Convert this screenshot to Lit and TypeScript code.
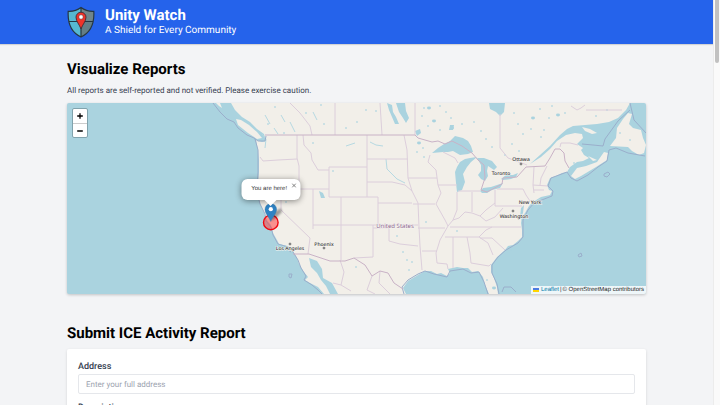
import { LitElement, html, svg, css } from "lit";
import { customElement } from "lit/decorators.js";

const LAND =
  "M231 103 L235 110 L242 117 L250 122 L257 129 L264 134 L266 141 L262 142 L256 140 L258 150 L259 160 L259 172 L258 182 L257 192 L260 203 L264 212 L266 219 L271 225 L273 233 L277 240 L279 244 L288 246 L293 251 L297 258 L299 264 L304 272 L308 277 L305 280 L310 283 L318 287 L324 294 L330 294 L326 286 L321 280 L317 273 L311 267 L309 258 L317 261 L322 269 L323 278 L332 283 L338 294 L406 294 L403 288 L408 281 L418 275 L425 271 L431 271 L437 274 L441 273 L447 276 L450 273 L448 269 L457 267 L463 268 L468 268 L472 272 L478 271 L483 277 L485 285 L489 294 L498 294 L497 287 L494 278 L491 272 L491 265 L497 257 L505 250 L508 246 L513 245 L518 241 L522 237 L522 230 L521 223 L522 217 L525 213 L529 206 L533 202 L541 197 L550 195 L552 191 L549 190 L547 185 L550 178 L556 176 L562 173 L567 172 L570 167 L577 162 L583 161 L589 158 L584 155 L581 150 L583 148 L577 144 L583 138 L582 134 L575 133 L566 135 L557 141 L550 149 L541 157 L530 164 L540 155 L550 146 L560 135 L567 129 L573 126 L597 124 L609 122 L618 118 L626 110 L630 103 Z";

const ISLANDS = [
  "M216 103 L220 103 L222 108 L219 106Z",
  "M236 119 L241 120 L249 125 L257 132 L262 138 L257 139 L248 133 L238 125Z",
  "M582 127 L590 129 L597 133 L592 134 L585 131Z",
  "M571 176 L577 168 L586 166 L597 162 L604 152 L608 153 L607 160 L596 167 L581 176 L575 179Z",
  "M588 156 L597 160 L593 161Z",
  "M628 113 L632 114 L629 124 L633 128 L641 130 L643 138 L646 145 L644 153 L639 155 L632 151 L628 147 L610 146 L616 138 L617 128 L623 119Z",
];

const LAKES = [
  "M432 153 L438 148 L444 144 L450 141 L455 136 L463 138 L468 141 L471 146 L473 152 L468 154 L460 155 L453 151 L448 152 L443 152Z",
  "M455 172 L457 167 L460 162 L465 159 L470 158 L477 157 L471 162 L467 167 L463 174 L465 182 L462 190 L457 192 L456 183Z",
  "M477 158 L484 158 L492 161 L497 167 L494 170 L488 166 L487 171 L488 176 L485 181 L481 179 L478 175 L481 171 L481 165Z",
  "M480 191 L483 188 L491 187 L497 185 L503 183 L500 188 L492 190 L487 193 L482 193Z",
  "M501 179 L506 175 L513 175 L518 173 L516 177 L511 179 L503 180Z",
  "M489 103 L505 103 L504 112 L500 116 L496 112 L490 109Z",
  "M396 103 L405 103 L406 111 L409 118 L406 123 L403 118 L399 112Z",
  "M387 103 L392 105 L393 112 L396 117 L399 124 L395 124 L392 117 L389 110Z",
  "M319 191 L323 193 L325 198 L321 198Z",
  "M415 131 L420 129 L421 133 L417 136Z",
  "M450 125 L454 125 L453 130 L449 130Z",
  "M521 208 L524 205 L523 213 L521 217 L522 221 L520 217Z",
];

const RIVERS =
  "M370 142 L376 145 L383 146 M386 159 L387 169 L397 179 L405 183 M346 146 L352 144 L355 143 M262 134 L266 139 L265 148 M265 115 L270 124 M281 115 L285 122 M290 122 L295 132 M274 128 L278 134 M313 112 L317 120";

const STATES = [
  "M290 103 L300 113 L310 126 L312 135 M335 103 V135 M380 103 L382 135 M415 103 V135 M500 114 V148 L508 158 L527 165",
  "M297 135 V158 L299 166 L299 189 M260 157 L263 161 L278 160 L297 159 M303 135 L304 145 L311 153 L312 160 L318 170 L329 170",
  "M258 189 H329 M329 167 H367 M329 167 V197 M367 135 V197 M329 197 H378 V225 M281 189 V210 L310 238 L308 254 M313 189 V229",
  "M341 197 V260 M313 225 H418 M378 203 H412 M373 225 V257 L354 258 M373 228 H389 V241 L400 244 L418 246",
  "M367 159 H408 M367 182 H392 L405 185 L412 191 L418 203 L419 227 L420 246 L422 270 M404 135 L407 150 L408 178 L412 191",
  "M408 178 H437 M430 155 L428 162 L436 170 L438 185 L441 193 L436 204 L445 220 L448 226 L440 240 L436 253 L437 263 L447 264 L448 269",
  "M413 204 H435 M438 185 H457 M443 152 L455 158 L458 163 M457 192 V210 L453 220 L448 226 M472 192 V212 M458 191 H480 M495 190 V206 H522",
  "M453 220 L459 218 L465 212 L472 213 L480 216 L486 210 L495 203 M497 189 H523 L526 195 L530 201 M418 228 H445 M450 227 H521 M445 237 H479 L486 230 L492 227",
  "M453 237 V268 M467 237 L470 253 L471 263 L489 266 L491 264 M422 251 H437 M479 237 L488 243 L493 255 M480 238 L492 238 L505 250 M480 216 L486 221 L495 217 L503 208",
  "M534 167 L533 185 L534 193 M533 185 L548 186 M534 190 H544 M547 166 L541 178 L540 185 M560 147 L561 143 L570 143 L578 145",
  "M571 106 L577 110 L581 108 L585 105 M586 110 H622 M340 260 L344 272 L341 285 L351 291 M341 285 L333 283 M372 276 L367 290 L375 294 M380 271 L379 283 L390 294",
];

const BORDER =
  "M265 135 H415 L418 138 L425 140 L432 142 L438 141 L445 144 L452 141 L462 146 L472 153 L478 160 L484 165 L485 178 L481 190 L487 192 L502 184 L503 178 L517 177 L526 167 L545 166 L550 158 L555 149 L560 149 L564 153 L565 161 L569 168 M293 254 L309 254 L330 261 L345 261 L354 258 L365 265 L372 276 L380 271 L388 273 L394 283 L403 289";

const SEA_BORDER =
  "M213 103 L220 112 L227 119 L234 122 L238 128 L247 135 L254 138 L258 141 L265 141 L266 136 M255 139 L258 150 L258 172 L257 192 L260 204 L265 214 L266 221 L271 227 L273 235 L278 244 L288 247 L293 252 L298 260 L301 268 L306 276 L304 280 L312 285 L318 290 L322 294 M404 294 L402 287 L408 280 L418 274 L425 271 L434 274 L447 277 L450 271 L463 269 L471 273 L479 272 L484 282 L488 294 M499 294 L497 284 L492 273 L492 265 L498 257 L506 250 L518 243 L523 237 L523 220 L528 210 L534 203 L552 196 L553 191 L548 186 L551 178 L567 172 L571 178 L577 181 L588 175 L598 167 L607 161 L609 150 L616 148 L628 153 L645 156 M630 103 L634 120 L646 133 M582 144 L593 145 L603 146 L605 139 L618 121 L630 110";

const OCEAN_ISLETS =
  "M604 174 L608 172 L610 174 L607 177 L604 176Z M578 255 L581 253 L582 256 L579 257Z M289 274 L292 274 L291 278 L289 277Z M502 292 L504 287 L511 287 L516 292 M288 250 L291 252";

const PONDS: [number, number, number][] = [
  [366, 110, 1], [346, 128, 1], [324, 124, 1], [313, 143, 1], [333, 171, 1], [306, 113, 1], [321, 105, 1],
  [357, 122, 1], [376, 111, 1], [429, 108, 2], [440, 106, 1], [422, 116, 1], [434, 121, 2], [446, 112, 1],
  [428, 126, 1], [440, 130, 1], [424, 108, 1], [419, 143, 2], [417, 152, 1], [423, 148, 1], [424, 157, 1],
  [451, 118, 1], [462, 124, 1], [452, 128, 2], [474, 122, 1], [481, 131, 1], [486, 139, 1], [492, 147, 1],
  [514, 113, 1], [518, 124, 1], [523, 134, 1], [533, 118, 2], [531, 129, 1], [544, 130, 1], [540, 109, 1],
  [558, 115, 2], [549, 118, 1], [565, 113, 1], [541, 137, 1], [512, 144, 1], [519, 151, 1], [505, 155, 1],
  [596, 116, 1], [607, 110, 1], [552, 106, 1], [403, 252, 1], [407, 260, 1], [397, 236, 1], [412, 262, 1],
  [356, 267, 1], [286, 202, 1], [457, 231, 1], [494, 288, 2], [487, 280, 1], [426, 222, 1], [409, 270, 1],
  [511, 250, 1], [275, 107, 1], [268, 124, 1], [284, 133, 1], [620, 133, 1], [574, 163, 1], [630, 140, 1],
];

const CITIES = [
  { name: "Ottawa", x: 521, y: 161, dot: [521, 164] },
  { name: "Toronto", x: 501, y: 175, dot: null },
  { name: "New York", x: 530, y: 204, dot: null },
  { name: "Washington", x: 514, y: 218, dot: [513, 211] },
  { name: "Phoenix", x: 324, y: 246, dot: [324, 248] },
  { name: "Los Angeles", x: 290, y: 250, dot: [290, 244] },
];

@customElement("report-map")
class ReportMap extends LitElement {
  static styles = css`
    :host {
      display: block;
      position: relative;
      height: 191px;
      overflow: hidden;
      border-radius: 2px;
      background: #aad3df;
      box-shadow: 0 1px 3px #0003;
      font-family: "Liberation Sans", Arial, sans-serif;
    }
    .canvas { display: block; width: 100%; height: 100%; }
    .land { fill: #f2efe9; }
    .lake { fill: #aad3df; }
    .river { fill: none; stroke: #b6d9e2; stroke-width: 1; }
    .state { fill: none; stroke: #dccedb; stroke-width: 1; }
    .border { fill: none; stroke: #c9b2c6; stroke-width: 1; }
    .sea { fill: none; stroke: #9aaecb; stroke-width: 1; }
    .city, .country {
      font-family: "Noto Sans", sans-serif;
      font-size: 6px;
      text-anchor: middle;
      fill: #333;
      stroke: #f7f5f1;
      stroke-width: 1;
      paint-order: stroke;
    }
    .city { font-size: 5px; font-weight: 500; }
    .country { fill: #8d6690; }
    .dot { fill: #888; stroke: #666; stroke-width: 0.5; }
    .zoom {
      position: absolute;
      left: 5px;
      top: 5px;
      display: flex;
      flex-direction: column;
      border: 1px solid #81a3ad;
      border-radius: 2px;
      background: #fff;
    }
    .step {
      display: grid;
      place-items: center;
      width: 14px;
      height: 14px;
      padding: 0;
      border: 0;
      background: none;
    }
    .step + .step { border-top: 1px solid #ccc; }
    .popup {
      position: absolute;
      left: 35.2%;
      top: 76px;
      transform: translateX(-50%);
      box-sizing: border-box;
      width: 59px;
      height: 21px;
      padding: 0 10px;
      border-radius: 6px;
      background: #fff;
      box-shadow: 0 1px 6px #0007;
      font-size: 6px;
      line-height: 21px;
      color: #333;
      white-space: nowrap;
    }
    .popup::after {
      content: "";
      position: absolute;
      left: 50%;
      top: 100%;
      border: 6px solid transparent;
      border-top-color: #fff;
      border-bottom: 0;
      transform: translateX(-50%);
    }
    .close {
      position: absolute;
      right: 2px;
      top: 2px;
      display: grid;
      place-items: center;
      width: 8px;
      height: 8px;
      padding: 0;
      border: 0;
      background: none;
    }
    .credit {
      position: absolute;
      right: 0;
      bottom: 0;
      display: flex;
      align-items: center;
      gap: 1px;
      padding: 0 2px;
      background: #fffc;
      font-size: 6px;
      line-height: 8px;
      color: #333;
      white-space: nowrap;
    }
    .flag { margin-right: 1px; }
    .link { color: #0078a8; text-decoration: none; }
    .plain { color: #222; text-decoration: none; }
  `;

  render() {
    return html`
      <svg class="canvas" viewBox="67 103 579 191" preserveAspectRatio="xMidYMid slice" role="img" aria-label="Map of reports">
        <defs>
          <filter id="soft"><feGaussianBlur stdDeviation="1.2"></feGaussianBlur></filter>
        </defs>
        <path class="land" d=${LAND}></path>
        ${ISLANDS.map((d) => svg`<path class="land" d=${d}></path>`)}
        ${LAKES.map((d) => svg`<path class="lake" d=${d}></path>`)}
        ${PONDS.map(([x, y, r]) => svg`<ellipse class="lake" cx=${x} cy=${y} rx=${r} ry=${r * 0.7}></ellipse>`)}
        <path class="river" d=${RIVERS}></path>
        ${STATES.map((d) => svg`<path class="state" d=${d}></path>`)}
        <path class="sea" d=${SEA_BORDER}></path>
        <path class="sea" d=${OCEAN_ISLETS}></path>
        <path class="border" d=${BORDER}></path>
        ${CITIES.map(
          (c) => svg`
            ${c.dot ? svg`<circle class="dot" cx=${c.dot[0]} cy=${c.dot[1]} r="1.1"></circle>` : ""}
            <text class="city" x=${c.x} y=${c.y}>${c.name}</text>`
        )}
        <text class="country" x="395" y="228">United States</text>
        <circle cx="270.8" cy="222.4" r="7.3" fill="#ff3333" fill-opacity="0.5" stroke="#f00911" stroke-width="1.4"></circle>
        <path d="M271 221 L274 212 L281 208 L282 212 L277 217Z" fill="#000" fill-opacity="0.35" filter="url(#soft)"></path>
        <path d="M270.8 221.5 C269.5 217.5 265 214 265 209.3 A5.8 5.8 0 0 1 276.6 209.3 C276.6 214 272.1 217.5 270.8 221.5Z" fill="#2f82c2" stroke="#2e74a6" stroke-width="0.4"></path>
        <circle cx="270.8" cy="209.2" r="2.1" fill="#fff"></circle>
      </svg>
      <div class="zoom">
        <button class="step" aria-label="Zoom in">
          <svg width="8" height="8" viewBox="0 0 8 8"><path d="M4 1.2V6.8M1.2 4H6.8" stroke="#000" stroke-width="1.3"></path></svg>
        </button>
        <button class="step" aria-label="Zoom out">
          <svg width="8" height="8" viewBox="0 0 8 8"><path d="M1.2 4H6.8" stroke="#000" stroke-width="1.3"></path></svg>
        </button>
      </div>
      <div class="popup">
        You are here!
        <button class="close" aria-label="Close popup">
          <svg width="5" height="5" viewBox="0 0 5 5"><path d="M.6 .6L4.4 4.4M4.4 .6L.6 4.4" stroke="#666" stroke-width="0.8"></path></svg>
        </button>
      </div>
      <div class="credit">
        <svg class="flag" width="6" height="4" viewBox="0 0 6 4"><path fill="#4c7be1" d="M0 0h6v2H0z"></path><path fill="#ffd500" d="M0 2h6v2H0z"></path></svg>
        <a class="link" href="#leaflet">Leaflet</a><span>|</span><a class="plain" href="#osm">© OpenStreetMap contributors</a>
      </div>
    `;
  }
}

@customElement("app-root")
class AppRoot extends LitElement {
  static styles = css`
    :host {
      display: flex;
      height: 100vh;
      overflow: hidden;
      background: #f3f4f6;
      font-family: Roboto, sans-serif;
      text-rendering: geometricPrecision;
      color: #000;
    }
    .page { flex: 1; min-width: 0; }
    .bar {
      display: flex;
      align-items: center;
      gap: 10px;
      height: 44px;
      padding: 0 67px;
      background: #2563eb;
      color: #fff;
      box-sizing: border-box;
      box-shadow: 0 1px 1px #0002;
    }
    .name { margin: 0; font-size: 15px; line-height: 17px; font-weight: 700; }
    .tagline { margin: 0; font-size: 10px; line-height: 13px; }
    .content { padding: 15px 67px 0; }
    .heading { margin: 0; font-size: 15px; line-height: 20px; font-weight: 700; }
    .note { margin: 6px 0; font-size: 8px; line-height: 12px; color: #374151; }
    .submit { margin-top: 29px; }
    .card {
      display: flex;
      flex-direction: column;
      margin-top: 6px;
      padding: 12px 11px;
      border-radius: 2px;
      background: #fff;
      box-shadow: 0 1px 3px #0002;
    }
    .label { font-size: 9px; line-height: 13px; font-weight: 500; color: #374151; }
    .field {
      box-sizing: border-box;
      width: 100%;
      height: 20px;
      margin-bottom: 8px;
      padding: 0 7px;
      border: 1px solid #e5e7eb;
      border-radius: 2px;
      background: #fff;
      font: 8px/12px Roboto, sans-serif;
      text-rendering: inherit;
      color: #111827;
    }
    .field::placeholder { color: #9ca3af; opacity: 1; }
    .scroll {
      flex: none;
      width: 7px;
      box-sizing: border-box;
      padding: 0 1px;
      border-left: 1px solid #ececec;
      background: #fafafa;
    }
    .thumb { height: 63px; border-radius: 0 0 2px 2px; background: #c1c1c1; }
  `;

  render() {
    return html`
      <div class="page">
        <header class="bar">
          <svg width="28" height="32" viewBox="0 0 28 32" aria-hidden="true">
            <path d="M14 1.5 C10 4.5 6 5.5 1.2 5.3 C.6 16 3 26 14 31 C25 26 27.4 16 26.8 5.3 C22 5.5 18 4.5 14 1.5Z" fill="#56b8d1"></path>
            <path d="M14 1.5 C18 4.5 22 5.5 26.8 5.3 C26.9 9 26.7 12 26 15 H14Z" fill="#70858a"></path>
            <path d="M14 15 H26 C24.5 22.5 21 28 14 31Z" fill="#637e86"></path>
            <path d="M14 1.5 C10 4.5 6 5.5 1.2 5.3 C.6 16 3 26 14 31 C25 26 27.4 16 26.8 5.3 C22 5.5 18 4.5 14 1.5Z M14 2V31 M2 15.5H26" fill="none" stroke="#263642" stroke-width="1.2"></path>
            <path d="M14 23 C12.5 18.5 9 15.5 9 11.2 A5 5 0 0 1 19 11.2 C19 15.5 15.5 18.5 14 23Z" fill="#ef3329" stroke="#422c35" stroke-width="0.9"></path>
            <circle cx="14" cy="11" r="2.2" fill="#fff" stroke="#5e3038" stroke-width="0.5"></circle>
          </svg>
          <div>
            <h1 class="name">Unity Watch</h1>
            <p class="tagline">A Shield for Every Community</p>
          </div>
        </header>
        <main class="content">
          <h2 class="heading">Visualize Reports</h2>
          <p class="note">All reports are self-reported and not verified. Please exercise caution.</p>
          <report-map></report-map>
          <h2 class="heading submit">Submit ICE Activity Report</h2>
          <form class="card">
            <label class="label" for="address">Address</label>
            <input class="field" id="address" type="text" placeholder="Enter your full address" />
            <label class="label" for="description">Description</label>
            <textarea class="field" id="description"></textarea>
          </form>
        </main>
      </div>
      <div class="scroll" aria-hidden="true"><div class="thumb"></div></div>
    `;
  }
}
